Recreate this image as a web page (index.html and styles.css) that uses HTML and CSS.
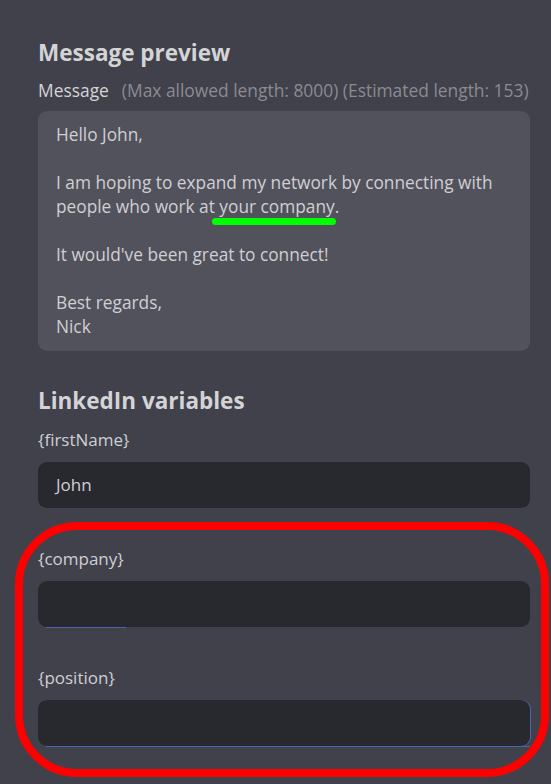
FILE: index.html
```html
<!DOCTYPE html>
<html>
<head>
<meta charset="utf-8">
<link rel="stylesheet" href="styles.css">
</head>
<body>
<main class="page">
  <section class="section">
    <h2 class="heading">Message preview</h2>
    <div class="label-row"><span class="label">Message</span><span class="note">(Max allowed length: 8000) (Estimated length: 153)</span></div>
    <div class="preview">
      <p>Hello John,</p>
      <p>I am hoping to expand my network by connecting with people who work at <span class="mark">your company</span>.</p>
      <p>It would've been great to connect!</p>
      <p>Best regards,<br>Nick</p>
    </div>
  </section>
  <section class="section vars">
    <h2 class="heading">LinkedIn variables</h2>
    <div class="field">
      <div class="field-label">{firstName}</div>
      <div class="input">John</div>
    </div>
    <div class="field">
      <div class="field-label">{company}</div>
      <div class="input"></div>
      <div class="focus-line short"></div>
    </div>
    <div class="field">
      <div class="field-label">{position}</div>
      <div class="input focused"></div>
      <div class="focus-line"></div>
    </div>
  </section>
  <div class="ring"></div>
</main>
</body>
</html>
```
FILE: styles.css
```css
html, body {
  margin: 0;
  padding: 0;
  background: #40414a;
}
body {
  width: 551px;
  height: 784px;
  overflow: hidden;
  font-family: "Open Sans", "Noto Sans", sans-serif;
  color: #cfcfd3;
}
.page {
  position: relative;
  padding: 38px 21px 0 38px;
  height: 784px;
  box-sizing: border-box;
}
.heading {
  margin: 0;
  font-size: 22.5px;
  font-weight: 700;
  line-height: 30px;
  color: #d4d4d7;
}
.label-row {
  margin-top: 10px;
  display: flex;
  gap: 13px;
  font-size: 17.4px;
  line-height: 24px;
  white-space: nowrap;
}
.label { color: #d4d4d7; }
.note { color: #8b8b92; }
.preview {
  margin-top: 9px;
  background: #52525c;
  border-radius: 9px;
  padding: 12px 18px;
  font-size: 17.3px;
  line-height: 24px;
  color: #cfcfd3;
}
.preview p { margin: 0 0 24px; }
.preview p:last-child { margin-bottom: 0; }
.mark {
  position: relative;
}
.mark::after {
  content: "";
  position: absolute;
  left: -7px;
  right: -1px;
  bottom: -7px;
  height: 7px;
  border-radius: 4px;
  background: #00ff00;
}
.vars { margin-top: 35px; }
.field { margin-top: 12px; }
.field + .field { margin-top: 39px; }
.field-label {
  font-size: 17px;
  line-height: 24px;
  color: #cfcfd3;
}
.input {
  margin-top: 10px;
  height: 46px;
  box-sizing: border-box;
  background: #28292e;
  border-radius: 9px;
  padding: 11px 18px;
  font-size: 17px;
  line-height: 24px;
  color: #cfcfd3;
}
.focus-line {
  height: 1px;
  margin-bottom: -1px;
  background: #4a64b4;
  margin-left: 8px;
}
.focus-line.short { width: 80px; }
.input.focused { box-shadow: 1px 0 0 #4a64b4; }
.ring {
  position: absolute;
  left: 15px;
  top: 522px;
  width: 534px;
  height: 255px;
  box-sizing: border-box;
  border: 8px solid #ff0000;
  border-radius: 62px;
  pointer-events: none;
}
```
